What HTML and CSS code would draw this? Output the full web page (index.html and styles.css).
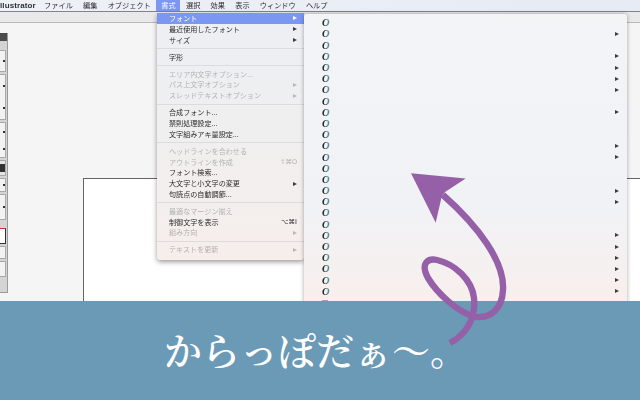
FILE: index.html
```html
<!DOCTYPE html>
<html lang="ja">
<head>
<meta charset="utf-8">
<title>からっぽだぁ〜。</title>
<link rel="stylesheet" href="styles.css">
</head>
<body>
<div class="screen">
  <div class="app">
    <div class="menubar">
      <span class="app-name">llustrator</span>
      <span class="mb-item">ファイル</span>
      <span class="mb-item">編集</span>
      <span class="mb-item">オブジェクト</span>
      <span class="mb-item active">書式</span>
      <span class="mb-item">選択</span>
      <span class="mb-item">効果</span>
      <span class="mb-item">表示</span>
      <span class="mb-item">ウィンドウ</span>
      <span class="mb-item">ヘルプ</span>
    </div>
    <div class="control-strip"></div>
    <div class="canvas">
      <div class="artboard"></div>
      <div class="tools">
        <div class="tools-head"></div>
        <div class="tool-group g1"><i class="tick"></i></div>
        <div class="tool-group g2"><i class="tick"></i><i class="tick"></i></div>
        <div class="tool-group g3"><i class="tick"></i><i class="tick"></i></div>
        <div class="tool-group g4"><i class="blk"></i></div>
        <div class="tool-group g5"><i class="tick"></i></div>
        <div class="tool-group g6"><i class="tick"></i></div>
        <div class="swatch"></div>
        <div class="tool-group g7"></div>
        <div class="tool-group g8"></div>
      </div>
      <div class="menu">
        <div class="row selected">フォント<b class="arr"></b></div>
        <div class="row">最近使用したフォント<b class="arr"></b></div>
        <div class="row">サイズ<b class="arr"></b></div>
        <div class="sep"></div>
        <div class="row">字形</div>
        <div class="sep"></div>
        <div class="row off">エリア内文字オプション...</div>
        <div class="row off">パス上文字オプション<b class="arr"></b></div>
        <div class="row off">スレッドテキストオプション<b class="arr"></b></div>
        <div class="sep"></div>
        <div class="row">合成フォント...</div>
        <div class="row">禁則処理設定...</div>
        <div class="row">文字組みアキ量設定...</div>
        <div class="sep"></div>
        <div class="row off">ヘッドラインを合わせる</div>
        <div class="row off">アウトラインを作成<span class="key">⇧⌘O</span></div>
        <div class="row">フォント検索...</div>
        <div class="row">大文字と小文字の変更<b class="arr"></b></div>
        <div class="row">句読点の自動調節...</div>
        <div class="sep"></div>
        <div class="row off">最適なマージン揃え</div>
        <div class="row">制御文字を表示<span class="key">⌥⌘I</span></div>
        <div class="row off">組み方向<b class="arr"></b></div>
        <div class="sep"></div>
        <div class="row off">テキストを更新<b class="arr"></b></div>
      </div>
      <div class="submenu">
        <div class="f"><span class="o">O</span></div>
        <div class="f"><span class="o">O</span><b class="arr"></b></div>
        <div class="f"><span class="o">O</span></div>
        <div class="f"><span class="o">O</span><b class="arr"></b></div>
        <div class="f"><span class="o">O</span><b class="arr"></b></div>
        <div class="f"><span class="o">O</span><b class="arr"></b></div>
        <div class="f"><span class="o">O</span><b class="arr"></b></div>
        <div class="f"><span class="o">O</span></div>
        <div class="f"><span class="o">O</span><b class="arr"></b></div>
        <div class="f"><span class="o">O</span></div>
        <div class="f"><span class="o">O</span></div>
        <div class="f"><span class="o">O</span><b class="arr"></b></div>
        <div class="f"><span class="o">O</span><b class="arr"></b></div>
        <div class="f"><span class="o">O</span></div>
        <div class="f"><span class="o">O</span></div>
        <div class="f"><span class="o">O</span><b class="arr"></b></div>
        <div class="f"><span class="o">O</span><b class="arr"></b></div>
        <div class="f"><span class="o">O</span></div>
        <div class="f"><span class="o">O</span></div>
        <div class="f"><span class="o">O</span><b class="arr"></b></div>
        <div class="f"><span class="o">O</span><b class="arr"></b></div>
        <div class="f"><span class="o">O</span><b class="arr"></b></div>
        <div class="f"><span class="o">O</span><b class="arr"></b></div>
        <div class="f"><span class="o">O</span><b class="arr"></b></div>
        <div class="f"><span class="o">O</span><b class="arr"></b></div>
        <div class="f"><i class="t"></i></div>
      </div>
    </div>
  </div>
  <svg class="curl" viewBox="0 0 640 400" width="640" height="400" aria-hidden="true">
    <polygon class="curl-head" points="411,173.3 465.7,178.5 445,192 441.5,197.5 435.7,222.7"/>
    <path class="curl-line" d="M443 195 C478 226 505 262 503 290 C502 310 490 318 476 317 C458 313 437 293 428 278 C420 263 428 258 437 260 C455 264 472 280 474 298 C476 320 465 335 450 343"/>
  </svg>
</div>
<div class="caption">からっぽだぁ〜。</div>
</body>
</html>
```

FILE: styles.css
```css
* { box-sizing: border-box; }
html, body { margin: 0; padding: 0; }
body {
  width: 640px;
  height: 400px;
  overflow: hidden;
  position: relative;
  display: flex;
  flex-direction: column;
  background: #6b9ab6;
  font-family: "Noto Sans CJK JP", "Liberation Sans", sans-serif;
}
.screen { height: 301px; flex: none; overflow: visible; }
.app {
  height: 301px;
  display: flex;
  flex-direction: column;
  overflow: hidden;
  filter: blur(0.4px);
}
.menubar {
  height: 12px;
  flex: none;
  display: flex;
  align-items: stretch;
  background: linear-gradient(90deg, #eef1f6, #e6ebf4);
  border-bottom: 1px solid #7f8490;
  font-size: 7.2px;
  line-height: 11px;
  color: #2c2c30;
  white-space: nowrap;
}
.app-name {
  font-family: "Liberation Sans", sans-serif;
  font-weight: 700;
  font-size: 8px;
  width: 39px;
  letter-spacing: 0.1px;
  color: #303036;
}
.mb-item { padding: 0 5.1px; }
.mb-item.active {
  background: #7b97f2;
  color: #fff;
  padding: 0 4.8px;
  margin-left: 0.6px;
  margin-right: 0.5px;
}
.control-strip {
  height: 11px;
  flex: none;
  background: #e9e9e9;
  border-bottom: 1px solid #b9b9b9;
}
.canvas { position: relative; flex: 1; background: #f5f5f5; }
.artboard {
  position: absolute;
  left: 83px;
  top: 155px;
  width: 600px;
  height: 200px;
  background: #fff;
  border: 1px solid #666;
}
.tools {
  position: absolute;
  left: 0;
  top: 10px;
  width: 8px;
  height: 260px;
  background: #d4d4d4;
  border-right: 1px solid #9a9a9a;
  border-bottom: 1px solid #9a9a9a;
  display: flex;
  flex-direction: column;
  gap: 2px;
}
.tools-head { height: 8px; background: #4b4b4b; margin-bottom: 7px; flex: none; }
.tool-group {
  flex: none;
  width: 6px;
  background: #f2f2f2;
  border: 1px solid #a8a8a8;
  border-left: 0;
  display: flex;
  flex-direction: column;
  justify-content: space-around;
  align-items: flex-end;
}
.tick { display: block; width: 2px; height: 2px; background: #333; }
.blk { display: block; width: 5px; height: 8px; background: #333; }
.g1 { height: 22px; }
.g2 { height: 46px; }
.g3 { height: 36px; }
.g4 { height: 16px; background: #e4e4e4; }
.g5 { height: 14px; }
.g6 { height: 26px; }
.g7 { height: 13px; }
.g8 { height: 16px; }
.swatch {
  height: 16px;
  width: 6px;
  flex: none;
  background: #fff;
  border: 1px solid #333;
  border-left: 0;
  border-top: 1px solid #c33;
  margin-top: 6px;
}
.menu {
  position: absolute;
  left: 157px;
  top: -10px;
  width: 147px;
  height: 247px;
  background: linear-gradient(180deg, #eceff4 0%, #f0efef 50%, #f6eeeb 100%);
  border-radius: 0 0 4px 4px;
  box-shadow: 0 2px 5px rgba(0, 0, 0, 0.4);
  font-size: 7.1px;
  color: #2b2b2b;
}
.row {
  height: 10.8px;
  line-height: 10.8px;
  padding: 0 7px 0 12px;
  display: flex;
  justify-content: space-between;
  align-items: center;
  white-space: nowrap;
}
.row.off { color: #b3b2b3; }
.row.selected { background: #7b97f2; color: #fff; }
.sep { height: 6.2px; position: relative; }
.sep::after {
  content: "";
  position: absolute;
  left: 0;
  right: 0;
  top: 2.6px;
  height: 1px;
  background: #dcdcdc;
}
.arr {
  display: block;
  width: 0;
  height: 0;
  border-left: 4.5px solid #3c3c3c;
  border-top: 2.6px solid transparent;
  border-bottom: 2.6px solid transparent;
}
.row.off .arr { border-left-color: #b8b8b8; }
.row.selected .arr { border-left-color: #fff; }
.key { font-family: "DejaVu Sans", "Noto Sans CJK JP", sans-serif; font-size: 6.5px; }
.submenu {
  position: absolute;
  left: 304px;
  top: -9px;
  width: 323px;
  height: 320px;
  padding-top: 3.2px;
  border-radius: 3px 3px 0 0;
  background: linear-gradient(180deg, #f3f4f6 0%, #f1f2f6 60%, #f8efec 92%);
  box-shadow: 0 0 4px rgba(0, 0, 0, 0.35);
}
.f {
  height: 11.2px;
  padding: 0 8px 0 18px;
  display: flex;
  justify-content: space-between;
  align-items: center;
}
.o {
  font-family: "Liberation Serif", serif;
  font-style: italic;
  font-weight: 700;
  font-size: 10.5px;
  line-height: 11px;
  background: linear-gradient(90deg, #222 0 50%, #4f8f95 65% 100%);
  -webkit-background-clip: text;
  background-clip: text;
  color: transparent;
}
.t { display: block; width: 6px; height: 7px; background: #a79cc9; margin-top: 2px; }
.curl {
  position: absolute;
  left: 0;
  top: 0;
  pointer-events: none;
}
.curl-head { fill: #9560a8; }
.curl-line { fill: none; stroke: #9560a8; stroke-width: 6.4; }
.caption {
  height: 99px;
  flex: none;
  background: #6b9ab6;
  color: #fff;
  font-family: "Noto Serif CJK JP", "Liberation Serif", serif;
  font-weight: 600;
  font-size: 38px;
  line-height: 96px;
  padding-left: 164px;
  white-space: nowrap;
}
```
